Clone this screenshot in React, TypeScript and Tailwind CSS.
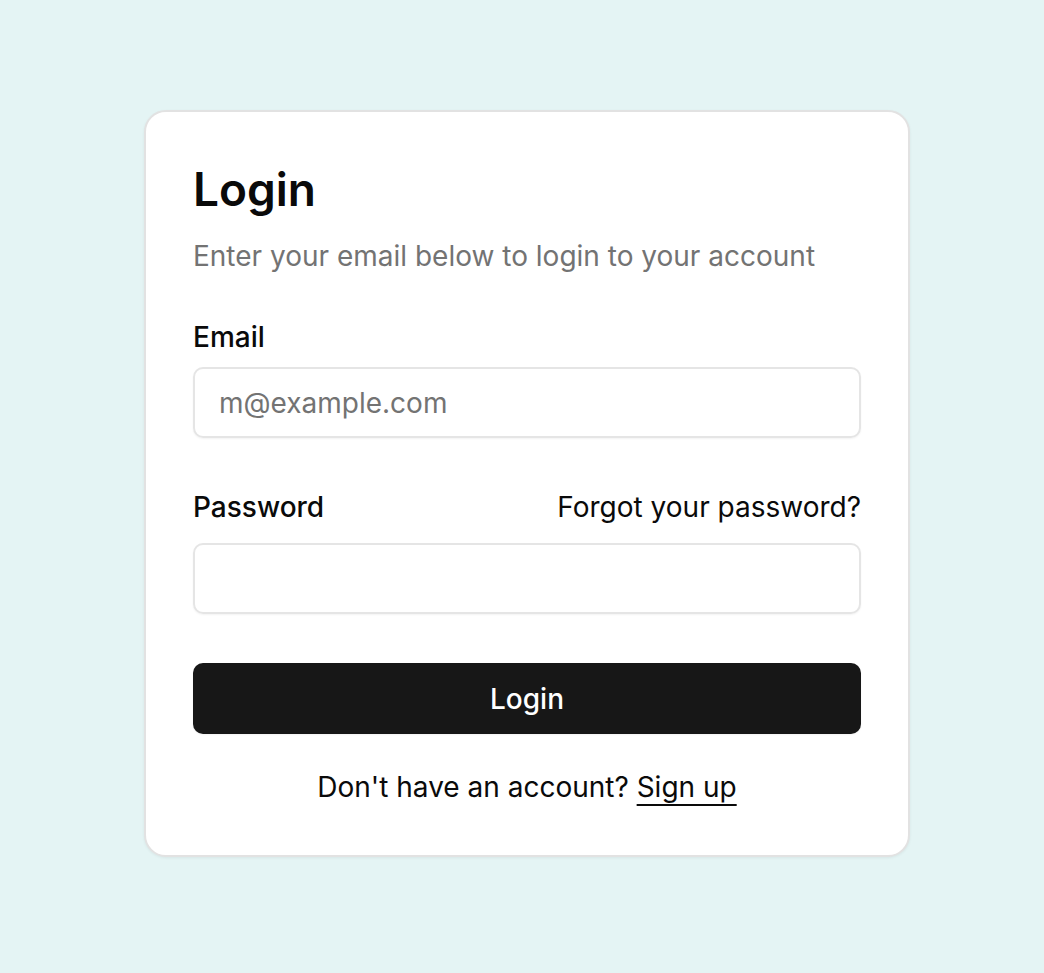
import React from "react";

export default function App() {
  return (
    <div
      className="min-h-screen w-full bg-[#e4f4f4] flex items-center justify-center pl-[10px] pb-[6px]"
      style={{ fontFamily: "Inter, 'Noto Sans', sans-serif" }}
    >
      <div className="w-[766px] bg-white rounded-[22px] border-2 border-[#e2e2e2] shadow-[0_1px_3px_rgba(0,0,0,0.06)] px-[47px] pt-[54px] pb-[54px] flex flex-col">
        <h1 className="text-[46px] leading-[46px] font-semibold text-[#0a0a0a]">Login</h1>
        <p className="mt-[30px] text-[28px] leading-[28px] text-[#737373]">
          Enter your email below to login to your account
        </p>
        <div className="mt-[53px] flex flex-col">
          <label className="text-[28px] leading-[28px] font-medium text-[#0a0a0a]">Email</label>
          <input
            type="email"
            placeholder="m@example.com"
            className="mt-[16px] h-[71px] w-full rounded-[10px] border-2 border-[#e5e5e5] px-6 text-[28px] text-[#0a0a0a] placeholder:text-[#737373] outline-none shadow-xs"
          />
        </div>
        <div className="mt-[55px] flex flex-col">
          <div className="flex items-center justify-between">
            <label className="text-[28px] leading-[28px] font-medium text-[#0a0a0a]">Password</label>
            <a className="text-[28px] leading-[28px] text-[#0a0a0a]">Forgot your password?</a>
          </div>
          <input
            type="password"
            className="mt-[22px] h-[71px] w-full rounded-[10px] border-2 border-[#e5e5e5] px-6 text-[28px] outline-none shadow-xs"
          />
        </div>
        <button className="mt-[49px] h-[71px] w-full rounded-[10px] bg-[#171717] text-white text-[28px] font-medium shadow-xs">
          Login
        </button>
        <div className="mt-[39px] text-center text-[28px] leading-[28px] text-[#0a0a0a]">
          Don't have an account?{" "}
          <a className="underline underline-offset-[7px] decoration-2">Sign up</a>
        </div>
      </div>
    </div>
  );
}
